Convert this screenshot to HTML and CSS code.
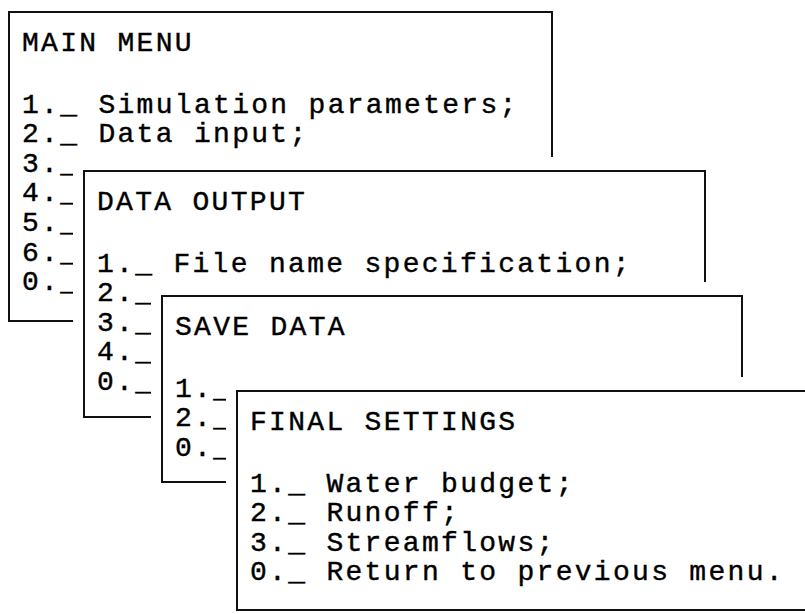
FILE: index.html
```html
<!DOCTYPE html>
<html lang="en">
<head>
<meta charset="utf-8">
<title>Menus</title>
<link rel="stylesheet" href="styles.css">
</head>
<body>
<div class="desktop">
  <section class="win win-main">
    <div class="win-title">MAIN MENU</div>
    <ul class="win-items">
      <li>1._ Simulation parameters;</li>
      <li>2._ Data input;</li>
      <li>3._</li>
      <li>4._</li>
      <li>5._</li>
      <li>6._</li>
      <li>0._</li>
    </ul>
  </section>
  <section class="win win-output">
    <div class="win-title">DATA OUTPUT</div>
    <ul class="win-items">
      <li>1._ File name specification;</li>
      <li>2._</li>
      <li>3._</li>
      <li>4._</li>
      <li>0._</li>
    </ul>
  </section>
  <section class="win win-save">
    <div class="win-title">SAVE DATA</div>
    <ul class="win-items">
      <li>1._</li>
      <li>2._</li>
      <li>0._</li>
    </ul>
  </section>
  <section class="win win-final">
    <div class="win-title">FINAL SETTINGS</div>
    <ul class="win-items">
      <li>1._ Water budget;</li>
      <li>2._ Runoff;</li>
      <li>3._ Streamflows;</li>
      <li>0._ Return to previous menu.</li>
    </ul>
  </section>
</div>
</body>
</html>
```

FILE: styles.css
```css
html, body {
  margin: 0;
  padding: 0;
  background: #fff;
  overflow: hidden;
}

.desktop {
  position: relative;
  width: 805px;
  height: 614px;
  overflow: hidden;
  font-family: "Liberation Mono", "Courier New", monospace;
  font-size: 28px;
  letter-spacing: 2.3px;
  color: #000;
  -webkit-text-stroke: 0.4px #000;
}

.win {
  position: absolute;
  box-sizing: border-box;
  background: #fff;
  border: 2px solid #111;
  padding: 16px 10px 18px 12px;
  box-shadow: 0 -3px 0 10px #fff;
}

.win-title {
  line-height: 29.6px;
  height: 29.6px;
  margin-bottom: 32px;
  white-space: pre;
}

.win-items {
  list-style: none;
  margin: 0;
  padding: 0;
}

.win-items li {
  line-height: 29.6px;
  height: 29.6px;
  white-space: pre;
}

.win-main {
  left: 8px;
  top: 11px;
  width: 545px;
  height: 311px;
  z-index: 1;
}

.win-output {
  left: 83px;
  top: 170px;
  width: 623px;
  height: 248px;
  z-index: 2;
}

.win-save {
  left: 161px;
  top: 295px;
  width: 582px;
  height: 188px;
  z-index: 3;
}

.win-final {
  left: 236px;
  top: 390px;
  width: 620px;
  height: 221px;
  z-index: 4;
}
```
